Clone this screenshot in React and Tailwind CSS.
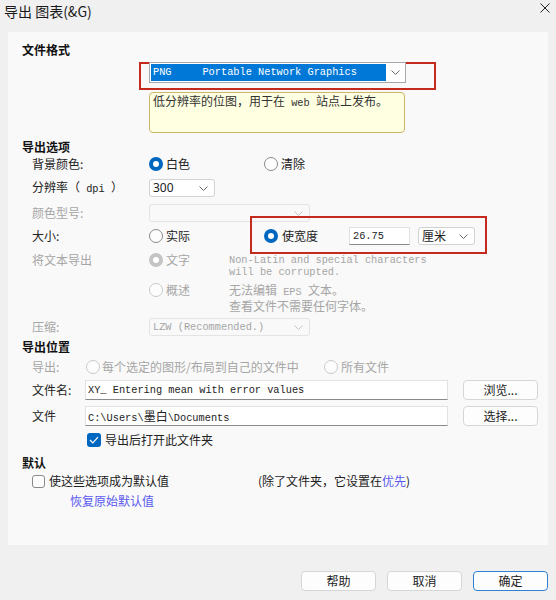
import React from "react";

const CN = "font-['Noto_Sans_CJK_SC',sans-serif]";
const MONO = "font-['Liberation_Mono','Noto_Sans_CJK_SC',monospace]";

const Chevron = ({ color = "#6b6b6b" }) => (
  <svg width="9" height="5" viewBox="0 0 9 5" fill="none">
    <path d="M0.5 0.5 L4.5 4.5 L8.5 0.5" stroke={color} strokeWidth="1" />
  </svg>
);

const Radio = ({ checked = false, disabled = false }) => {
  if (checked) {
    return (
      <span
        className={`w-[14px] h-[14px] shrink-0 rounded-full flex items-center justify-center ${
          disabled ? "bg-[#c4c4c4]" : "bg-[#0067c0]"
        }`}
      >
        <span className="w-[6px] h-[6px] rounded-full bg-white" />
      </span>
    );
  }
  return (
    <span
      className={`w-[14px] h-[14px] shrink-0 rounded-full border bg-[#fdfdfd] ${
        disabled ? "border-[#cacaca]" : "border-[#8a8a8a]"
      }`}
    />
  );
};

const Checkbox = ({ checked = false }) =>
  checked ? (
    <span className="w-[14px] h-[14px] shrink-0 rounded-[3px] bg-[#0067c0] flex items-center justify-center">
      <svg width="10" height="8" viewBox="0 0 10 8" fill="none">
        <path d="M1 4 L3.8 6.8 L9 1.2" stroke="white" strokeWidth="1.2" />
      </svg>
    </span>
  ) : (
    <span className="w-[13px] h-[13px] shrink-0 rounded-[3px] border border-[#8a8a8a] bg-[#fdfdfd]" />
  );

const Button = ({ children, primary = false }) => (
  <div
    className={`w-[75px] h-[20px] rounded-[4px] bg-[#fdfdfd] flex items-center justify-center text-[12px] text-[#222] ${CN} ${
      primary ? "border border-[#2f7fd2]" : "border border-[#d6d6d6]"
    }`}
  >
    {children}
  </div>
);

const Header = ({ className, children }) => (
  <div className={`h-[16px] pl-[14px] flex items-center text-[12px] font-bold text-[#111] ${className}`}>
    {children}
  </div>
);

export default function App() {
  return (
    <div className={`w-[556px] h-[600px] bg-[#f0f0f0] flex flex-col text-[#222] ${CN}`}>
      {/* title bar */}
      <div className="h-[32px] flex items-start justify-between pl-[4px] pr-[6px]">
        <div className="pt-[3px] text-[14px] leading-[16px] text-[#1a1a1a]">导出 图表(&amp;G)</div>
        <svg className="mt-[3px]" width="10" height="10" viewBox="0 0 10 10" fill="none">
          <path d="M0.5 0.5 L9.5 9.5 M9.5 0.5 L0.5 9.5" stroke="#222" strokeWidth="1" />
        </svg>
      </div>

      {/* panel */}
      <div className="relative mx-[8px] h-[513px] bg-[#f9f9f9] flex flex-col text-[12px] leading-[16px]">
        <div className="absolute left-[131px] top-[30px] w-[297px] h-[28px] border-2 border-[#c42b1c]" />
        <div className="absolute left-[242px] top-[184px] w-[237px] h-[38px] border-2 border-[#c42b1c]" />

        <Header className="mt-[10px]">文件格式</Header>

        <div className="relative mt-[4px] ml-[141px] w-[257px] h-[21px] flex items-center bg-white border border-[#a8a8a8] p-[1px]">
          <div className={`flex-1 h-full bg-[#0078d7] text-white text-[10.3px] leading-[17px] pl-[2px] whitespace-pre ${MONO}`}>
            PNG     Portable Network Graphics
          </div>
          <div className="w-[18px] flex justify-center">
            <Chevron />
          </div>
        </div>

        <div className="mt-[9px] ml-[141px] w-[256px] h-[41px] bg-[#ffffe1] border border-[#cdb56a] rounded-[4px] px-[3px] text-[#333]">
          低分辨率的位图，用于在<span className={`text-[10.3px] whitespace-pre ${MONO}`}> web </span>站点上发布。
        </div>

        <Header className="mt-[6px]">导出选项</Header>

        <div className="mt-[1px] h-[16px] pl-[24px] flex items-center">
          <div className="w-[117px]">背景颜色:</div>
          <div className="w-[115px] flex items-center gap-[3px]">
            <Radio checked />
            白色
          </div>
          <div className="flex items-center gap-[3px]">
            <Radio />
            清除
          </div>
        </div>

        <div className="mt-[7px] h-[18px] pl-[24px] flex items-center">
          <div className="w-[117px]">
            分辨率（<span className={`text-[10.3px] whitespace-pre ${MONO}`}> dpi </span>）
          </div>
          <div className="w-[66px] h-full bg-white border border-[#d2d2d2] rounded-[3px] flex items-center justify-between pl-[3px] pr-[6px]">
            <span className="font-['Noto_Sans',sans-serif]">300</span>
            <Chevron />
          </div>
        </div>

        <div className="mt-[7px] h-[18px] pl-[24px] flex items-center">
          <div className="w-[117px] text-[#a6a6a6]">颜色型号:</div>
          <div className="w-[161px] h-full bg-[#f9f9f9] border border-[#e4e4e4] rounded-[3px] flex items-center justify-end pr-[6px]">
            <Chevron color="#c4c4c4" />
          </div>
        </div>

        <div className="mt-[5px] h-[18px] pl-[24px] flex items-center">
          <div className="w-[117px]">大小:</div>
          <div className="w-[115px] flex items-center gap-[3px]">
            <Radio />
            实际
          </div>
          <div className="w-[85px] flex items-center gap-[4px]">
            <Radio checked />
            使宽度
          </div>
          <div className={`w-[61px] h-full bg-white border border-[#e2e2e2] border-b-[#8a8a8a] pl-[3px] text-[10.3px] leading-[17px] ${MONO}`}>
            26.75
          </div>
          <div className="ml-[8px] w-[57px] h-full bg-white border border-[#d2d2d2] rounded-[3px] flex items-center justify-between pl-[3px] pr-[6px]">
            <span>厘米</span>
            <Chevron />
          </div>
        </div>

        <div className="mt-[9px] h-[24px] pl-[24px] flex items-start leading-[12px]">
          <div className="w-[117px] text-[#a6a6a6]">将文本导出</div>
          <div className="w-[80px] h-[12px] flex items-center gap-[3px] text-[#a6a6a6]">
            <Radio checked disabled />
            文字
          </div>
          <div className={`text-[10.3px] leading-[12px] text-[#a6a6a6] ${MONO}`}>
            Non-Latin and special characters
            <br />
            will be corrupted.
          </div>
        </div>

        <div className="mt-[5px] h-[26px] pl-[24px] flex items-start leading-[13px]">
          <div className="w-[117px]" />
          <div className="w-[80px] h-[13px] flex items-center gap-[3px] text-[#a6a6a6]">
            <Radio disabled />
            概述
          </div>
          <div className="text-[#a6a6a6]">
            无法编辑<span className={`text-[10.3px] whitespace-pre ${MONO}`}> EPS </span>文本。
            <br />
            查看文件不需要任何字体。
          </div>
        </div>

        <div className="mt-[9px] h-[18px] pl-[24px] flex items-center">
          <div className="w-[117px] text-[#a6a6a6]">压缩:</div>
          <div className="w-[161px] h-full bg-[#f9f9f9] border border-[#e4e4e4] rounded-[3px] flex items-center justify-between pl-[3px] pr-[6px]">
            <span className={`text-[10.3px] text-[#a6a6a6] ${MONO}`}>LZW (Recommended.)</span>
            <Chevron color="#c4c4c4" />
          </div>
        </div>

        <Header className="mt-[3px]">导出位置</Header>

        <div className="mt-[4px] h-[16px] pl-[24px] flex items-center text-[#a6a6a6]">
          <div className="w-[54px]">导出:</div>
          <div className="w-[238px] flex items-center gap-[2px]">
            <Radio disabled />
            每个选定的图形/布局到自己的文件中
          </div>
          <div className="flex items-center gap-[3px]">
            <Radio disabled />
            所有文件
          </div>
        </div>

        <div className="mt-[5px] h-[20px] pl-[24px] flex items-center">
          <div className="w-[53px]">文件名:</div>
          <div className={`w-[363px] h-full bg-white border border-[#e2e2e2] border-b-[#8a8a8a] pl-[2px] text-[10.3px] leading-[18px] whitespace-pre ${MONO}`}>
            XY_ Entering mean with error values
          </div>
          <div className="ml-[15px]">
            <Button>浏览...</Button>
          </div>
        </div>

        <div className="mt-[6px] h-[20px] pl-[24px] flex items-center">
          <div className="w-[53px]">文件</div>
          <div className={`w-[363px] h-full bg-white border border-[#e2e2e2] border-b-[#8a8a8a] pl-[2px] text-[10.3px] leading-[18px] ${MONO}`}>
            C:\Users\<span className={`text-[12px] ${CN}`}>墨白</span>\Documents
          </div>
          <div className="ml-[15px]">
            <Button>选择...</Button>
          </div>
        </div>

        <div className="mt-[6px] h-[16px] pl-[79px] flex items-center gap-[4px]">
          <Checkbox checked />
          导出后打开此文件夹
        </div>

        <Header className="mt-[7px]">默认</Header>

        <div className="mt-[2px] h-[16px] pl-[24px] flex items-center">
          <div className="w-[226px] flex items-center gap-[4px]">
            <Checkbox />
            使这些选项成为默认值
          </div>
          <div>
            (除了文件夹，它设置在<span className="text-[#5a5af0]">优先</span>)
          </div>
        </div>

        <div className="mt-[4px] h-[16px] pl-[62px] flex items-center text-[#5a5af0]">恢复原始默认值</div>
      </div>

      {/* buttons */}
      <div className="mt-[26px] pr-[8px] flex justify-end gap-[11px]">
        <Button>帮助</Button>
        <Button>取消</Button>
        <Button primary>确定</Button>
      </div>
    </div>
  );
}
